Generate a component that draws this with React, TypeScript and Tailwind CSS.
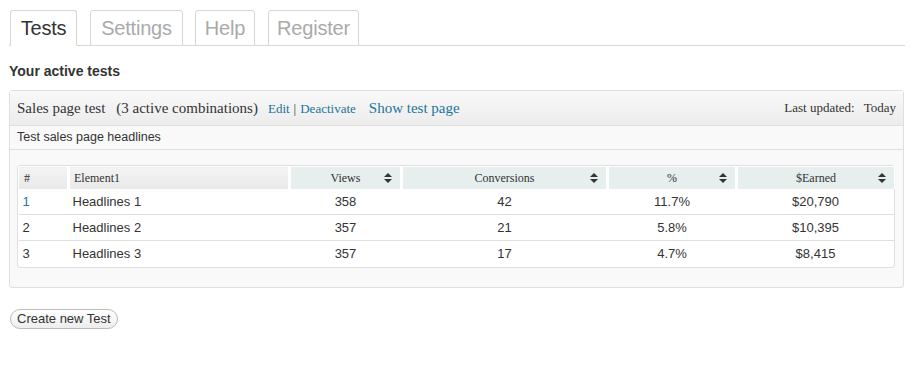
import React from "react";

const rows = [
  { n: "1", name: "Headlines 1", views: "358", conv: "42", pct: "11.7%", earned: "$20,790" },
  { n: "2", name: "Headlines 2", views: "357", conv: "21", pct: "5.8%", earned: "$10,395" },
  { n: "3", name: "Headlines 3", views: "357", conv: "17", pct: "4.7%", earned: "$8,415" },
];

function SortIcon() {
  return (
    <svg width="8" height="10" viewBox="0 0 8 10" className="absolute right-[8px] top-1/2 -translate-y-1/2">
      <path d="M4 0 L8 4 L0 4 Z" fill="#333" />
      <path d="M0 6 L8 6 L4 10 Z" fill="#333" />
    </svg>
  );
}

function Tab({ label, active, className }: { label: string; active?: boolean; className: string }) {
  return (
    <div
      className={`h-[36px] flex items-center justify-center rounded-t-[3px] border border-[#d6d6d6] text-[20px] tracking-[-0.2px] -mb-px ${className} ${
        active ? "bg-white border-b-white text-[#333]" : "bg-white text-[#aaa]"
      }`}
    >
      {label}
    </div>
  );
}

export default function App() {
  const serif = "font-['Liberation_Serif',Georgia,serif]";
  return (
    <div className="w-[914px] h-[385px] bg-white font-['Liberation_Sans',Arial,sans-serif] text-[#333] pt-[10px] px-[9px]">
      {/* tabs */}
      <div className="flex pl-[1px] border-b border-[#d6d6d6] w-[896px]">
        <Tab label="Tests" active className="w-[67px]" />
        <Tab label="Settings" className="w-[93px] ml-[13px]" />
        <Tab label="Help" className="w-[60px] ml-[12px]" />
        <Tab label="Register" className="w-[91px] ml-[13px]" />
      </div>

      <h2 className="mt-[16px] text-[14px] font-bold leading-[18px]">Your active tests</h2>

      {/* test panel */}
      <div className="mt-[10px] w-[895px] border border-[#dfdfdf] rounded-[3px] bg-[#f9f9f9] pb-[19px]">
        <div className={`h-[35px] flex items-center justify-between px-[7px] border-b border-[#dfdfdf] bg-gradient-to-b from-[#f9f9f9] to-[#ececec] ${serif}`}>
          <div className="flex items-baseline">
            <span className="text-[15px] text-[#333]">Sales page test</span>
            <span className="text-[15px] text-[#333] ml-[11px]">(3 active combinations)</span>
            <a className="text-[13px] text-[#21759b] ml-[10px]">Edit</a>
            <span className="text-[13px] text-[#333] mx-[4px]">|</span>
            <a className="text-[13px] text-[#21759b]">Deactivate</a>
            <a className="text-[15px] text-[#21759b] ml-[13px]">Show test page</a>
          </div>
          <div className="text-[13px] text-[#333]">
            Last updated:<span className="ml-[9px]">Today</span>
          </div>
        </div>
        <div className="h-[24px] flex items-center px-[7px] text-[12.5px] border-b border-[#dfdfdf]">
          Test sales page headlines
        </div>

        <div className="mt-[15px] ml-[7px] w-[878px] border border-[#dfdfdf] rounded-[3px] bg-white">
          <table className="w-full border-collapse table-fixed">
            <colgroup>
              <col className="w-[50px]" />
              <col className="w-[221px]" />
              <col className="w-[112px]" />
              <col className="w-[206px]" />
              <col className="w-[129px]" />
              <col className="w-[158px]" />
            </colgroup>
            <thead>
              <tr className={`text-[12px] ${serif}`}>
                <th className="h-[22px] p-0 font-normal text-left border-t border-l border-r-[3px] border-white bg-gradient-to-b from-[#f4f4f4] to-[#e9e9e9] pl-[5px]">#</th>
                <th className="p-0 font-normal text-left border-t border-r-[3px] border-white bg-gradient-to-b from-[#f4f4f4] to-[#e9e9e9] pl-[4px]">Element1</th>
                <th className="relative p-0 font-normal text-center border-t border-r-[3px] border-white bg-[#e6eeee]">Views<SortIcon /></th>
                <th className="relative p-0 font-normal text-center border-t border-r-[3px] border-white bg-[#e6eeee]">Conversions<SortIcon /></th>
                <th className="relative p-0 font-normal text-center border-t border-r-[3px] border-white bg-[#e6eeee]">%<SortIcon /></th>
                <th className="relative p-0 font-normal text-center border-t border-r-[1px] border-white bg-[#e6eeee]">$Earned<SortIcon /></th>
              </tr>
            </thead>
            <tbody className="text-[13px]">
              {rows.map((r, i) => (
                <tr key={r.n} className={i < rows.length - 1 ? "border-b border-[#dfdfdf]" : ""}>
                  <td className={`h-[26px] pl-[4px] ${i === 0 ? "text-[#21759b]" : ""}`}>{r.n}</td>
                  <td className="pl-[4px]">{r.name}</td>
                  <td className="text-center">{r.views}</td>
                  <td className="text-center">{r.conv}</td>
                  <td className="text-center">{r.pct}</td>
                  <td className="text-center">{r.earned}</td>
                </tr>
              ))}
            </tbody>
          </table>
        </div>
      </div>

      <button className="mt-[21px] ml-[1px] h-[20px] px-[6px] rounded-full border border-[#bbb] bg-gradient-to-b from-white to-[#ededed] text-[13px] text-[#333] leading-none">
        Create new Test
      </button>
    </div>
  );
}
